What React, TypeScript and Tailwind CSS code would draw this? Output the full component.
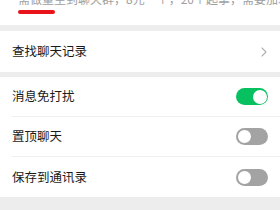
import React from 'react'

const font = { fontFamily: '"Noto Sans CJK SC", "Noto Sans", sans-serif' }

function Toggle({ on }: { on: boolean }) {
  return (
    <div
      className={
        on
          ? 'w-[32px] h-[17px] rounded-full bg-[#07c160] p-[1.5px] flex justify-end'
          : 'w-[32px] h-[17px] rounded-full bg-[#a3a3a3] p-[1px] flex justify-start'
      }
    >
      <div
        className={
          on
            ? 'w-[14px] h-[14px] rounded-full bg-white'
            : 'w-[15px] h-[15px] rounded-full bg-white border border-[#9a9a9a]'
        }
      />
    </div>
  )
}

function Chevron() {
  return (
    <svg width="6" height="10" viewBox="0 0 6 10" fill="none">
      <path d="M1 1l4 4-4 4" stroke="#b2b2b2" strokeWidth="1.1" strokeLinecap="round" strokeLinejoin="round" />
    </svg>
  )
}

export default function App() {
  return (
    <div className="w-[280px] h-[210px] bg-[#ededed] overflow-hidden" style={font}>
      {/* top notice, cut at the top edge */}
      <div className="h-[25px] bg-white overflow-hidden">
        <div className="-mt-[8px] pl-[18px] pr-[12px] flex items-start justify-between">
          <p className="text-[12px] leading-[14px] text-[#a0a0a0] whitespace-nowrap">
            需做量至到聊天群，8元一个，20个起拿，需要加
          </p>
          <div className="mt-[2px]">
            <Chevron />
          </div>
        </div>
        <div className="ml-[18px] mt-[4px] w-[37px] h-[4px] rounded-full bg-[#e8131b]" />
      </div>

      <div className="mt-[6px] h-[41px] bg-white flex items-center justify-between pl-[12px] pr-[13px]">
        <span className="text-[12.5px] text-[#1a1a1a]">查找聊天记录</span>
        <Chevron />
      </div>

      <div className="mt-[5px] bg-white">
        {[
          { label: '消息免打扰', on: true },
          { label: '置顶聊天', on: false },
          { label: '保存到通讯录', on: false },
        ].map((row, i) => (
          <div key={row.label} className="pl-[12px]">
            <div
              className={
                i < 2
                  ? 'h-[40px] flex items-center justify-between pr-[12px] border-b border-[#efefef]'
                  : 'h-[40px] flex items-center justify-between pr-[12px]'
              }
            >
              <span className="text-[12.5px] text-[#1a1a1a]">{row.label}</span>
              <Toggle on={row.on} />
            </div>
          </div>
        ))}
      </div>
    </div>
  )
}
